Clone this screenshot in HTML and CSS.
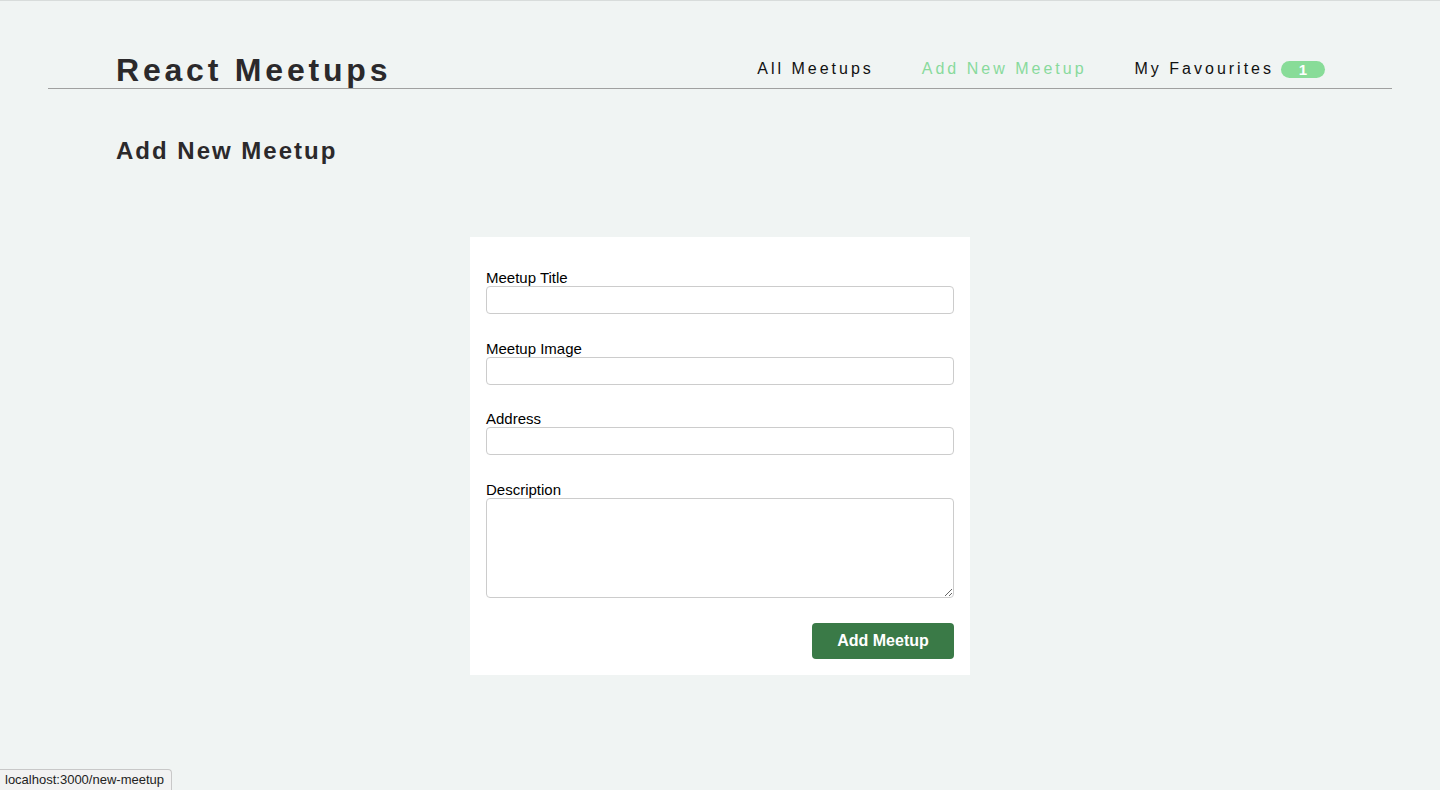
FILE: index.html
```html
<!DOCTYPE html>
<html lang="en">
<head>
<meta charset="utf-8">
<title>React Meetups</title>
<link rel="stylesheet" href="styles.css">
</head>
<body>
  <header class="header">
    <div class="logo">React Meetups</div>
    <nav class="nav">
      <a class="nav-link" href="#">All Meetups</a>
      <a class="nav-link active" href="#">Add New Meetup</a>
      <a class="nav-link" href="#">My Favourites<span class="badge">1</span></a>
    </nav>
  </header>
  <main class="main">
    <h1 class="page-title">Add New Meetup</h1>
    <div class="card">
      <form class="form">
        <div class="control">
          <label for="title">Meetup Title</label>
          <input type="text" id="title">
        </div>
        <div class="control">
          <label for="image">Meetup Image</label>
          <input type="url" id="image">
        </div>
        <div class="control">
          <label for="address">Address</label>
          <input type="text" id="address">
        </div>
        <div class="control">
          <label for="description">Description</label>
          <textarea id="description"></textarea>
        </div>
        <div class="actions">
          <button type="button" class="btn">Add Meetup</button>
        </div>
      </form>
    </div>
  </main>
  <div class="status">localhost:3000/new-meetup</div>
</body>
</html>
```

FILE: styles.css
```css
* { box-sizing: border-box; }

html, body {
  margin: 0;
  padding: 0;
}

body {
  background: #f0f4f3;
  border-top: 1px solid #d8dcdb;
  font-family: "Liberation Sans", Arial, sans-serif;
  color: #2b292b;
  min-height: 790px;
}

.header {
  margin: 0 48px;
  padding: 0 67px 0 68px;
  height: 88px;
  border-bottom: 1px solid #a0a0a0;
  display: flex;
  justify-content: space-between;
  align-items: flex-end;
}

.logo {
  font-size: 32px;
  line-height: 32px;
  font-weight: bold;
  letter-spacing: 3.8px;
  margin-bottom: 2px;
  color: #2b292b;
}

.nav {
  display: flex;
  align-items: center;
  margin-bottom: 10px;
}

.nav-link {
  font-size: 16px;
  line-height: 18px;
  letter-spacing: 3px;
  color: #111;
  text-decoration: none;
  margin-left: 48px;
  display: flex;
  align-items: center;
}

.nav-link.active {
  color: #88da9c;
}

.badge {
  display: inline-block;
  background: #88dc98;
  color: #fff;
  border-radius: 9px;
  width: 44px;
  height: 17px;
  line-height: 17px;
  text-align: center;
  font-size: 15px;
  font-weight: bold;
  letter-spacing: 0;
  margin-left: 7px;
}

.main {
  padding: 0 116px;
}

.page-title {
  margin: 0;
  padding-top: 48px;
  font-size: 24px;
  line-height: 28px;
  font-weight: bold;
  letter-spacing: 2px;
  color: #2b292b;
}

.card {
  width: 500px;
  margin: 72px auto 0;
  background: #fff;
  padding: 32px 16px 16px;
}

.control + .control {
  margin-top: 25.67px;
}

.control label {
  display: block;
  font-size: 15px;
  line-height: 17px;
  color: #000;
}

.control input,
.control textarea {
  display: block;
  width: 100%;
  border: 1px solid #cccccc;
  border-radius: 4px;
  font: inherit;
  background: #fff;
  margin: 0;
}

.control input {
  height: 28px;
}

.control textarea {
  height: 100px;
}

.actions {
  display: flex;
  justify-content: flex-end;
  margin-top: 25px;
}

.btn {
  height: 36px;
  width: 142px;
  background: #3a7a47;
  color: #fff;
  border: none;
  border-radius: 4px;
  font-family: "Liberation Sans", Arial, sans-serif;
  font-size: 16px;
  font-weight: bold;
  cursor: pointer;
}

.status {
  position: fixed;
  left: 0;
  bottom: 0;
  height: 21px;
  line-height: 20px;
  padding: 0 7px 0 5px;
  font-size: 13px;
  color: #222;
  background: #f2f2f2;
  border: 1px solid #c8c8c8;
  border-left: none;
  border-bottom: none;
  border-top-right-radius: 4px;
  font-family: "Liberation Sans", Arial, sans-serif;
}
```
